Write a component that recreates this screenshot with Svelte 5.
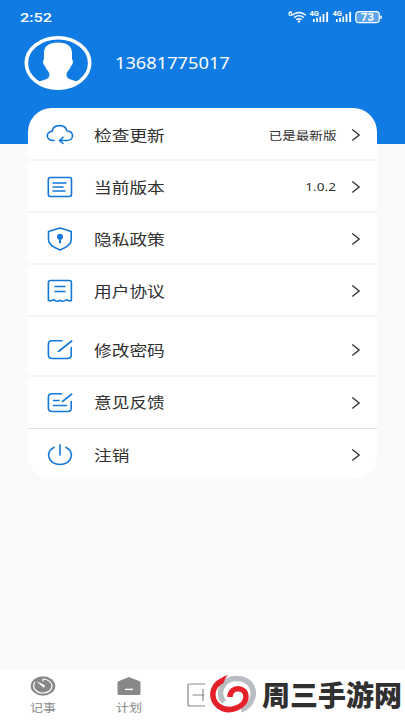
<script lang="ts">
  type Item = { icon: string; label: string; value?: string };

  const account: Item[] = [
    { icon: 'cloud', label: '检查更新', value: '已是最新版' },
    { icon: 'version', label: '当前版本', value: '1.0.2' },
    { icon: 'shield', label: '隐私政策' },
    { icon: 'agreement', label: '用户协议' },
  ];
  const settings: Item[] = [
    { icon: 'edit', label: '修改密码' },
    { icon: 'feedback', label: '意见反馈' },
    { icon: 'power', label: '注销' },
  ];
  const groups = [account, settings];
</script>

<div class="screen">
  <header>
    <div class="status">
      <span class="time">2:52</span>
      <svg class="signals" width="96" height="16" viewBox="0 0 96 16">
        <text x="0" y="7" class="tiny">6</text>
        <g fill="none" stroke="#fff" stroke-width="1.4">
          <path d="M4 6.3Q11 .8 18 6.3" />
          <path d="M6.2 8.6Q11 4.7 15.8 8.6" />
          <path d="M8.3 10.8Q11 8.6 13.7 10.8" />
        </g>
        <circle cx="11" cy="12.4" r="1.2" fill="#fff" />
        {#each [22, 45] as x}
          <g transform="translate({x} 0)" fill="#fff">
            <text x="-.5" y="7" class="tiny" textLength="9.5" lengthAdjust="spacingAndGlyphs">4G</text>
            <rect x="3" y="10" width="1.6" height="3" />
            <rect x="6.2" y="8.8" width="1.7" height="4.2" />
            <rect x="9.4" y="7.5" width="1.7" height="5.5" />
            <rect x="12.6" y="5" width="1.8" height="8" />
            <rect x="16.2" y="3" width="1.9" height="10" />
          </g>
        {/each}
        <rect x="67.8" y="2.6" width="23.5" height="11" rx="3.2" fill="#5ba2ee" stroke="#fff" stroke-width="1.2" />
        <rect x="92.3" y="6.5" width="1.5" height="3.5" rx=".7" fill="#fff" />
        <text x="73" y="11.8" class="level" textLength="13" lengthAdjust="spacingAndGlyphs">73</text>
      </svg>
    </div>
    <div class="profile">
      <svg width="68" height="56" viewBox="0 0 68 56">
        <ellipse cx="34" cy="28" rx="31.7" ry="25.3" fill="none" stroke="#fff" stroke-width="3.6" />
        <path fill="#fff" d="M34 7.5C25 7.5 20 11 20 18V24.5C18.5 25 18.8 29.5 21 31C22 35 25.5 36 25.5 40C25.5 44 20 45 14.5 46.5C20 51 27 53.5 34 53.5S48 51 53.5 46.5C48 45 42.5 44 42.5 40C42.5 36 46 35 47 31C49.2 29.5 49.5 25 48 24.5V18C48 11 43 7.5 34 7.5Z" />
      </svg>
      <span class="phone">13681775017</span>
    </div>
  </header>

  <main>
    {#each groups as items}
      <section>
        {#each items as item}
          <div class="row">
            <svg class="icon" width="28" height="26" viewBox="0 0 28 26">
              {#if item.icon === 'cloud'}
                <path d="M8 18.4C4 19 1.3 16.8 1.3 13.8C1.3 11.3 3.3 9.6 6.3 9.2C6.7 5.8 9.6 3.6 13.5 3.6C17.5 3.6 20.4 5.8 20.9 9C24.4 9.2 26.5 11.3 26.5 13.8C26.5 16.7 24 18.5 21 18.5H14" />
                <path d="M17 15.4L13.5 18.6L17 21.5" />
              {:else if item.icon === 'version'}
                <rect x="2.3" y="3.5" width="23.2" height="19" rx="2.2" />
                <path d="M7 9H20M7 13H17M7 17H19" />
              {:else if item.icon === 'shield'}
                <path d="M14 2L25.2 5.5V14C25.2 18.8 19 22 14 24C9 22 2.5 18.8 2.5 14V5.5Z" />
                <circle cx="14" cy="10.8" r="2.2" fill="#1377d8" />
                <path d="M14 12V16.5" stroke-width="2" />
              {:else if item.icon === 'agreement'}
                <path d="M2.4 22.5V4.3Q2.4 2.5 4.5 2.5H23.3Q25.4 2.5 25.4 4.3V22.5Q22.5 23.5 20.5 21.5Q17 24.5 14 22.3Q10.5 24.5 7.5 21.5Q5.2 23.5 2.4 22.5Z" />
                <path d="M9 8.5H19M9 13.5H19" />
              {:else if item.icon === 'edit'}
                <path d="M16 3.7H6Q2.4 3.7 2.4 7V18.3Q2.4 21.5 6 21.5H21.5Q25.2 21.5 25.2 18.3V10.5M12.5 14.5L25.7 4" />
              {:else if item.icon === 'feedback'}
                <path d="M15.5 3.7H6Q2.4 3.7 2.4 7V18.3Q2.4 21.5 6 21.5H21.5Q25.2 21.5 25.2 18.3V11.5M16.5 11.5L25.7 4.2M7.5 10.5H13M7.5 15.5H20.5" />
              {:else}
                <path d="M8.2 5.3C-1.5 10.5 2.5 22.5 14 22.5S29.5 10.5 19.8 5.3M14 2.8V13" />
              {/if}
            </svg>
            <span class="label">{item.label}</span>
            {#if item.value}
              <span class="value">{item.value}</span>
            {/if}
            <svg class="arrow" width="10" height="14" viewBox="0 0 10 14">
              <path d="M1.3 1.5L8.2 7L1.3 12.5" />
            </svg>
          </div>
        {/each}
      </section>
    {/each}
  </main>

  <nav>
    <div class="tab">
      <svg width="26" height="20" viewBox="0 0 26 20">
        <ellipse cx="13" cy="10" rx="12.3" ry="9.7" fill="#888" />
        <path d="M5 6C1.5 11 5.5 17 13 17S25 10 19.5 5.4Q17 3 13 3V5.5" fill="none" stroke="#fff" stroke-width="1.2" />
        <path d="M6 5L13.5 11.5Q15.5 11 14.5 9Z" fill="#fff" />
      </svg>
      <span>记事</span>
    </div>
    <div class="tab">
      <svg width="26" height="20" viewBox="0 0 26 20">
        <path d="M13 1L23.5 5.2Q24.5 5.7 24.5 6.5V17.5Q24.5 19 22.8 19H3.2Q1.5 19 1.5 17.5V6.5Q1.5 5.7 2.5 5.2Z" fill="#888" />
        <path d="M9 13.4H17" stroke="#fff" stroke-width="1.4" />
      </svg>
      <span>计划</span>
    </div>
    <svg class="add" width="20" height="24" viewBox="0 0 20 24">
      <path d="M18 1H3Q1 1 1 3V21Q1 23 3 23H18M5.5 12H17.5M16 6V18" />
    </svg>
    <div class="brand">
      <svg width="48" height="40" viewBox="0 0 48 40">
        <g fill="none" stroke-width="5.5">
          <path d="M15 28C8 20 12 5 27 4.5C40 4 46.5 14 43.5 24C41.5 30 38 34 32 36" stroke="#b9bdc2" />
          <path d="M13.5 6.5C2 12 1 25 9.5 32C20 40 37 33 37 22.5C37 12.5 21 11.5 21 23" stroke="#e3202a" />
        </g>
        <path d="M20 1Q16 2.5 14.8 9L11 6Q13 2 20 1Z" fill="#e3202a" />
      </svg>
      <span>周三手游网</span>
    </div>
  </nav>
</div>

<style>
  :global(body) {
    background: #fafafa;
  }

  .screen {
    height: 720px;
    display: flex;
    flex-direction: column;
    overflow: hidden;
    background: #fafafa;
    font-family: "Noto Sans", "Noto Sans CJK SC", sans-serif;
    color: #303030;
  }

  header {
    height: 144px;
    flex: none;
    background: #117be4;
    color: #fff;
  }
  .status {
    display: flex;
    justify-content: space-between;
    align-items: center;
    height: 33px;
    padding: 0 21px 0 20px;
  }
  .time {
    font: 500 13.5px/16px Roboto, sans-serif;
    transform: scaleX(1.2);
    transform-origin: left;
  }
  .tiny {
    font: 700 7.5px Roboto, sans-serif;
    fill: #fff;
  }
  .level {
    font: 700 10px Roboto, sans-serif;
    fill: #fff;
  }
  .profile {
    display: flex;
    align-items: center;
    gap: 23px;
    height: 60px;
    padding-left: 24px;
  }
  .phone {
    font-size: 16px;
    transform: scaleX(1.14);
    transform-origin: left;
  }

  main {
    width: 349px;
    height: 371px;
    flex: none;
    box-sizing: border-box;
    margin: -36px 0 0 28px;
    padding-top: 1px;
    border-radius: 24px;
    background: #fff;
    overflow: hidden;
    position: relative;
  }
  section + section {
    padding-top: 8px;
  }
  .row {
    height: 52px;
    box-sizing: border-box;
    display: flex;
    align-items: center;
    padding: 2px 16px 0 18px;
    border-bottom: 2px solid #f6f6f6;
  }
  section + section .row:nth-child(-n + 2) {
    padding-top: 0;
  }
  section + section .row:nth-child(2) {
    border-bottom: 1px solid #e2e2e2;
  }
  section + section .row:last-child {
    border-bottom-color: transparent;
  }
  .icon {
    fill: none;
    stroke: #1377d8;
    stroke-width: 1.6;
    stroke-linecap: round;
    stroke-linejoin: round;
  }
  .label {
    margin: 0 0 2px 20px;
    font-size: 15px;
    white-space: nowrap;
    transform: scaleX(1.18);
    transform-origin: left;
  }
  .value {
    margin: 0 0 1px auto;
    font-size: 11.5px;
    white-space: nowrap;
    transform: scaleX(1.18);
    transform-origin: right;
  }
  .arrow {
    margin-left: auto;
    fill: none;
    stroke: #303030;
    stroke-width: 1.3;
  }
  .value + .arrow {
    margin-left: 15px;
  }

  nav {
    height: 50px;
    margin-top: auto;
    display: flex;
    background: #fff;
  }
  .tab {
    width: 86px;
    display: flex;
    flex-direction: column;
    align-items: center;
    padding-top: 6px;
    box-sizing: border-box;
    color: #888;
  }
  .tab span {
    font-size: 11px;
    line-height: 16px;
    margin-top: 4px;
    transform: scaleX(1.18);
  }
  .add {
    margin: 13px 0 0 15px;
    fill: none;
    stroke: #888;
    stroke-width: 1.2;
  }
  .brand {
    display: flex;
    align-items: center;
    height: 48px;
    margin-left: 2px;
  }
  .brand span {
    margin-left: 5px;
    font-family: "Noto Sans CJK SC", sans-serif;
    font-size: 28px;
    font-weight: 900;
    line-height: 40px;
    white-space: nowrap;
  }
</style>
